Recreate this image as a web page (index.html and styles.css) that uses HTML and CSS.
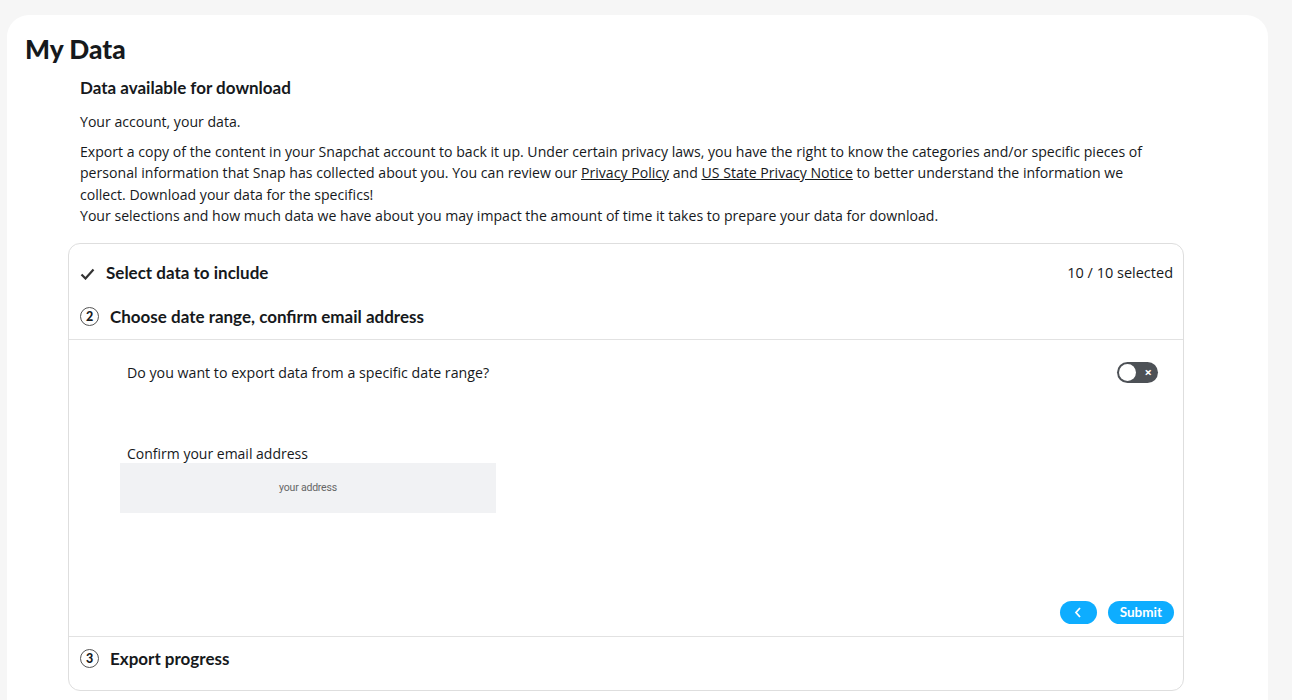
FILE: index.html
```html
<!DOCTYPE html>
<html lang="en">
<head>
    <meta charset="UTF-8">
    <meta name="viewport" content="width=device-width, initial-scale=1.0">
    <title>My Data</title>
    <link rel="stylesheet" href="styles.css">
</head>
<body>

<div class="page">
    <h1 class="title">My Data</h1>

    <div class="intro">
        <h2>Data available for download</h2>
        <p>Your account, your data.</p>
        <p>Export a copy of the content in your Snapchat account to back it up. Under certain privacy laws, you have the right to know the categories and/or specific pieces of personal information that Snap has collected about you. You can review our <a href="#">Privacy Policy</a> and <a href="#">US State Privacy Notice</a> to better understand the information we collect. Download your data for the specifics!<br>
        Your selections and how much data we have about you may impact the amount of time it takes to prepare your data for download.</p>
    </div>

    <div class="steps">
        <div class="step step-done">
            <svg class="check" width="15" height="12" viewBox="0 0 15 12">
                <path d="M1.5 6.5 L5.5 10.5 L13.5 1.5" fill="none" stroke="#333" stroke-width="2.2"/>
            </svg>
            <span class="step-title">Select data to include</span>
            <span class="step-count">10 / 10 selected</span>
        </div>

        <div class="step">
            <span class="num">2</span>
            <span class="step-title">Choose date range, confirm email address</span>
        </div>

        <div class="step-body">
            <div class="question">
                <span>Do you want to export data from a specific date range?</span>
                <span class="toggle"><span class="knob"></span><span class="x">&times;</span></span>
            </div>

            <label class="email-label">Confirm your email address</label>
            <input class="email" type="text" placeholder="your address">

            <div class="actions">
                <button class="btn btn-back">
                    <svg width="8" height="11" viewBox="0 0 8 11"><path d="M6 1 L2 5.5 L6 10" fill="none" stroke="#fff" stroke-width="1.8"/></svg>
                </button>
                <button class="btn">Submit</button>
            </div>
        </div>

        <div class="step step-last">
            <span class="num">3</span>
            <span class="step-title">Export progress</span>
        </div>
    </div>
</div>

</body>
</html>
```

FILE: styles.css
```css
body {
    margin: 0;
    background: #f6f6f6;
    font-family: 'Open Sans', 'Noto Sans', sans-serif;
    color: #16191c;
}
.page {
    margin: 15px 24px 0 7px;
    background: #fff;
    border-radius: 22px 22px 0 0;
    padding: 19px 0 10px 0;
    min-height: 700px;
    box-sizing: border-box;
}
.title {
    font-family: 'Lato', sans-serif;
    font-size: 26.3px;
    font-weight: 900;
    margin: 0 0 0 18px;
    line-height: 30px;
}
.intro {
    margin: 0 0 0 73px;
    width: 1085px;
}
.intro h2 {
    font-family: 'Lato', sans-serif;
    font-size: 17px;
    font-weight: 700;
    margin: 14px 0 13px 0;
    line-height: 20px;
}
.intro p {
    font-size: 14.1px;
    line-height: 21.6px;
    margin: 0 0 8px 0;
}
.intro a {
    color: #16191c;
}
.steps {
    margin: 16px 84px 0 61px;
    border: 1px solid #dedede;
    border-radius: 12px;
}
.step {
    display: flex;
    align-items: center;
    padding: 0 10px 0 11px;
    height: 44px;
}
.step-done {
    margin-top: 7px;
}
.step-title {
    font-family: 'Lato', sans-serif;
    font-size: 17px;
    font-weight: 700;
}
.check {
    margin: 2px 11px 0 0;
}
.step-count {
    margin-left: auto;
    font-size: 14.5px;
}
.num {
    width: 17px;
    height: 17px;
    border: 1.5px solid #555;
    border-radius: 50%;
    font-family: 'Lato', sans-serif;
    font-size: 12.5px;
    font-weight: 900;
    display: flex;
    align-items: center;
    justify-content: center;
    margin-right: 11px;
}
.step-body {
    border-top: 1px solid #e2e2e2;
    border-bottom: 1px solid #e2e2e2;
    padding: 22px 24px 12px 51px;
}
.question {
    display: flex;
    justify-content: space-between;
    align-items: center;
    font-size: 14.2px;
    padding-left: 7px;
}
.toggle {
    width: 41px;
    height: 21px;
    margin-right: 1px;
    background: #4d5156;
    border-radius: 11px;
    display: flex;
    align-items: center;
    justify-content: space-between;
    padding: 0 6px 0 2px;
    box-sizing: border-box;
}
.knob {
    width: 17px;
    height: 17px;
    border-radius: 50%;
    background: #fff;
}
.x {
    color: #fff;
    font-size: 13px;
    font-weight: 700;
    line-height: 1;
}
.email-label {
    display: block;
    font-size: 14px;
    margin: 61px 0 0 7px;
}
.email {
    display: block;
    width: 376px;
    height: 50px;
    border: none;
    background: #f1f2f4;
    text-align: center;
    font-family: 'Roboto', sans-serif;
    font-size: 10.5px;
    letter-spacing: -0.2px;
    box-sizing: border-box;
}
.email::placeholder {
    color: #666;
}
.actions {
    display: flex;
    justify-content: flex-end;
    gap: 11px;
    margin-top: 88px;
    margin-right: -15px;
}
.btn {
    background: #0eadff;
    color: #fff;
    border: none;
    border-radius: 12px;
    height: 23px;
    padding: 0 12px;
    font-family: 'Lato', sans-serif;
    font-weight: 700;
    font-size: 13.5px;
}
.btn-back {
    width: 37px;
    display: flex;
    align-items: center;
    justify-content: center;
}
.step-last {
    height: 43px;
    margin-bottom: 10px;
}
```
